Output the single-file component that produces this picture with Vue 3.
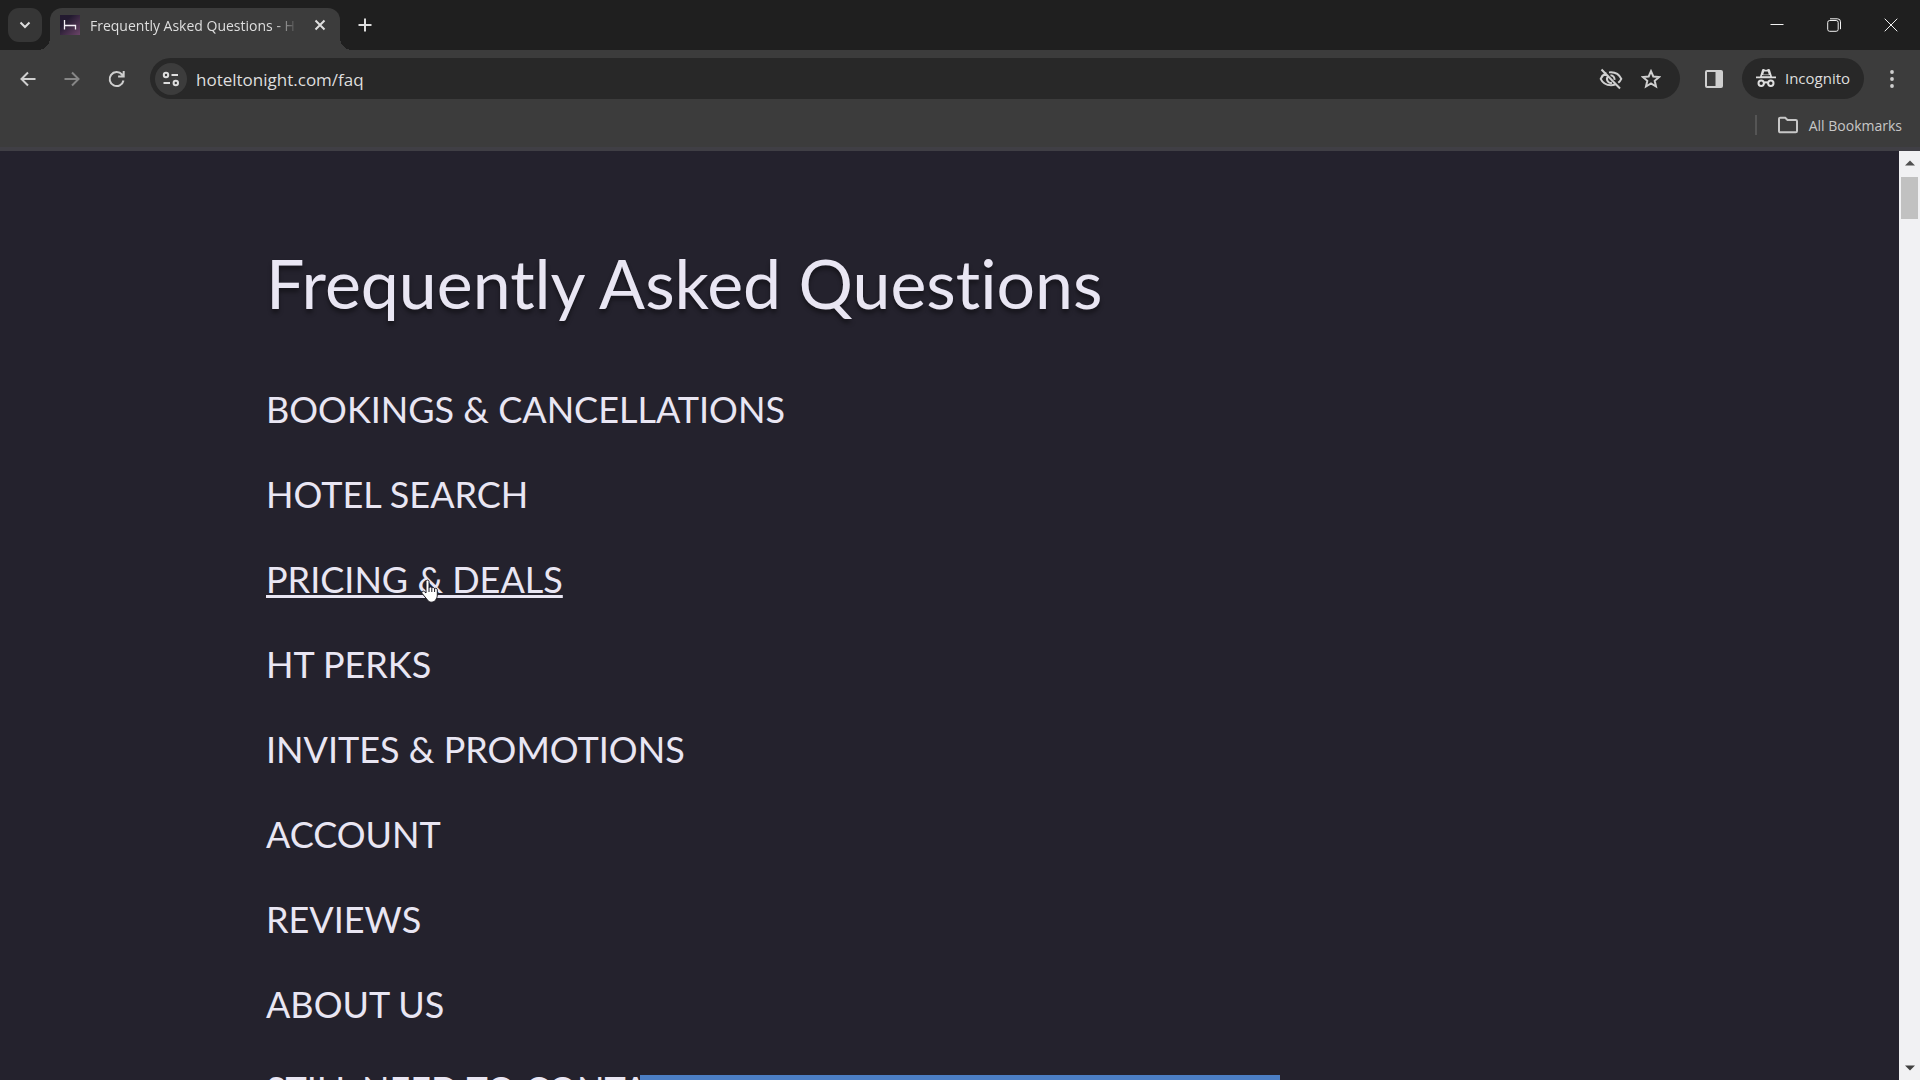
<script setup>
const topics = [
  'Bookings & Cancellations',
  'Hotel Search',
  'Pricing & Deals',
  'HT Perks',
  'Invites & Promotions',
  'Account',
  'Reviews',
  'About Us',
  'Still Need To Contact Us?',
]
const hovered = 2
</script>

<template>
  <div class="browser">
    <header class="tabs">
      <button class="tab-search" aria-label="Search tabs">
        <svg width="14" height="14" viewBox="0 0 14 14"><path d="M2.5 4.5 7 9l4.5-4.5" class="line" /></svg>
      </button>
      <div class="tab">
        <svg class="favicon" width="20" height="20" viewBox="0 0 20 20">
          <defs>
            <linearGradient id="fav" x1="0" y1="0" x2="1" y2="1">
              <stop offset=".3" stop-color="#231a30" />
              <stop offset="1" stop-color="#6b4468" />
            </linearGradient>
          </defs>
          <rect width="20" height="20" fill="url(#fav)" />
          <path d="M4.500 5v9.500M4.500 10.500h11V14.500" fill="none" stroke="#f4eef6" stroke-width="1.300" />
        </svg>
        <span class="tab-title">Frequently Asked Questions - H</span>
        <button class="tab-close" aria-label="Close tab">
          <svg width="12" height="12" viewBox="0 0 12 12"><path d="m1.500 1.500 9 9m0-9-9 9" class="line" /></svg>
        </button>
      </div>
      <button class="new-tab" aria-label="New tab">
        <svg width="14" height="14" viewBox="0 0 14 14"><path d="M7 .5v13M.5 7h13" class="line" /></svg>
      </button>
      <div class="window-controls">
        <button aria-label="Minimize">
          <svg width="14" height="14" viewBox="0 0 14 14"><path d="M.5 6.500h13" class="thin" /></svg>
        </button>
        <button aria-label="Restore">
          <svg width="14" height="14" viewBox="0 0 14 14">
            <rect x=".7" y="2.500" width="10.500" height="10.800" rx="2" class="thin" />
            <path d="M3 .8h7.500a3 3 0 0 1 3 3v7.400" class="thin" />
          </svg>
        </button>
        <button aria-label="Close">
          <svg width="14" height="14" viewBox="0 0 14 14"><path d="m.7.7 12.600 12.600m0-12.600L.7 13.300" class="thin" /></svg>
        </button>
      </div>
    </header>

    <div class="toolbar">
      <nav class="history">
        <button class="tool" aria-label="Back">
          <svg width="18" height="18" viewBox="0 0 18 18"><path d="M16.500 9H2.500m6.500-6.500L2.500 9 9 15.500" class="line" /></svg>
        </button>
        <button class="tool off" aria-label="Forward">
          <svg width="18" height="18" viewBox="0 0 18 18"><path d="M1.500 9h14M9 2.500 15.500 9 9 15.500" class="line" /></svg>
        </button>
        <button class="tool" aria-label="Reload">
          <svg width="18" height="18" viewBox="0 0 18 18">
            <path d="M16.500 10.500A7 7 0 1 1 15 4.500L16.500 6.200M16.700 1v5.600h-5.600" class="line" />
          </svg>
        </button>
      </nav>
      <div class="omnibox">
        <button class="site-info" aria-label="Site information">
          <svg width="18" height="16" viewBox="0 0 18 16">
            <circle cx="4" cy="4" r="2.200" class="line" /><path d="M9.500 4H16M1.500 12h6.500" class="line" />
            <circle cx="13.800" cy="12" r="2.200" class="line" />
          </svg>
        </button>
        <input class="address" type="text" value="hoteltonight.com/faq" aria-label="Address" />
        <button class="tool narrow" aria-label="Third-party cookies blocked">
          <svg width="24" height="22" viewBox="0 0 24 22">
            <path d="M7.500 5C4.800 6.200 2.800 8.300 1.700 10.800c1.800 4 5.700 6.400 10.300 6.400 1.400 0 2.800-.2 4-.7M10 4.400c.7-.1 1.300-.2 2-.2 4.600 0 8.500 2.600 10.300 6.600-.7 1.500-1.700 2.800-3 3.900M11.500 7.200a4 4 0 0 1 4 4.600M8.600 8.800A4 4 0 0 0 13 14.800M2.500 1.500l18.500 19" class="line" />
          </svg>
        </button>
        <button class="tool narrow" aria-label="Bookmark this tab">
          <svg width="20" height="20" viewBox="0 0 20 20">
            <path d="m10 2.200 2.300 5.300 5.800.5-4.400 3.800 1.300 5.700-5-3-5 3 1.300-5.700L1.900 8l5.800-.5z" class="line" />
          </svg>
        </button>
      </div>
      <button class="tool" aria-label="Side panel">
        <svg width="20" height="20" viewBox="0 0 20 20">
          <rect x="2" y="2" width="16" height="16" rx="1" class="line" /><path d="M11.500 2H18v16h-6.500z" fill="currentColor" />
        </svg>
      </button>
      <button class="incognito">
        <svg width="20" height="20" viewBox="0 0 20 20">
          <path d="M0 8.500h4L6 2c.2-.8.800-1.200 1.600-.9l2.400.8 2.400-.8c.8-.3 1.400.1 1.600.9l2 6.500h4v1.800H0z" fill="currentColor" />
          <path d="M6 7.700h8" stroke="#282828" stroke-width="1" />
          <path d="M8.200 3.400h3.600l1 3H7.200z" fill="#282828" />
          <circle cx="5.200" cy="15.300" r="2.700" class="line" /><circle cx="14.800" cy="15.300" r="2.700" class="line" />
          <path d="M7.900 15q2.100-1.500 4.200 0" class="line" />
        </svg>
        <span>Incognito</span>
      </button>
      <button class="tool" aria-label="Menu">
        <svg width="6" height="18" viewBox="0 0 6 18" fill="currentColor">
          <circle cx="3" cy="2" r="1.900" /><circle cx="3" cy="9" r="1.900" /><circle cx="3" cy="16" r="1.900" />
        </svg>
      </button>
    </div>

    <div class="bookmarks">
      <button class="all-bookmarks">
        <svg width="22" height="18" viewBox="0 0 22 18">
          <path d="M2 15V3a1.300 1.300 0 0 1 1.300-1.300h4.900l2.300 2.300h8.200A1.300 1.300 0 0 1 20 5.300V15a1.300 1.300 0 0 1-1.300 1.300H3.300A1.300 1.300 0 0 1 2 15z" class="line" />
        </svg>
        <span>All Bookmarks</span>
      </button>
    </div>

    <div class="viewport">
      <main class="page">
        <h1>Frequently Asked Questions</h1>
        <ul class="topics">
          <li v-for="(topic, i) in topics" :key="topic">
            <a href="#" :class="{ hovered: i === hovered }">{{ topic }}<svg
              v-if="i === hovered" class="pointer" width="20" height="24" viewBox="0 0 20 24">
              <path d="M6 2.500C6 .6 9 .6 9 2.500V9c.3-1.500 2.700-1.300 2.800.3.500-1.300 2.700-1 2.800.6.600-1.100 2.700-.8 2.700.9V16c0 2-.6 3-1.300 4.300C14.500 24 9 24 7.500 21L2.200 14.500c-1.200-1.600.8-3.200 2.200-1.900L6 14z" fill="#fff" stroke="#1b1922" stroke-width="1" />
              <path d="M9 9v4m2.800-3.500V13m2.800-3v3" stroke="#1b1922" stroke-width="1" />
            </svg></a>
          </li>
        </ul>
      </main>
      <div class="scrollbar" aria-hidden="true">
        <svg width="10" height="6" viewBox="0 0 10 6"><path d="m0 5.500 5-5 5 5z" fill="#505050" /></svg>
        <div class="thumb"></div>
        <svg width="10" height="6" viewBox="0 0 10 6"><path d="m0 .5 5 5 5-5z" fill="#404040" /></svg>
      </div>
      <div class="banner"></div>
    </div>
  </div>
</template>

<style>
body {
  margin: 0;
  background: #24222d;
}
</style>

<style scoped>
.browser {
  display: flex;
  flex-direction: column;
  height: 100vh;
  overflow: hidden;
  background: #3c3c3c;
  color: #dedede;
  font-family: "Open Sans", "Noto Sans", sans-serif;
}
button {
  display: flex;
  align-items: center;
  justify-content: center;
  flex: none;
  padding: 0;
  border: 0;
  background: none;
  color: inherit;
  font: inherit;
}
svg {
  display: block;
  flex: none;
}
.line {
  fill: none;
  stroke: currentColor;
  stroke-width: 2;
}
.thin {
  fill: none;
  stroke: #f2f2f2;
  stroke-width: 1;
}

.tabs {
  display: flex;
  flex: none;
  height: 50px;
  padding-left: 8px;
  background: #1f1f1f;
}
.tab-search {
  width: 34px;
  height: 34px;
  margin-top: 8px;
  border-radius: 11px;
  background: #363636;
}
.tab {
  position: relative;
  display: flex;
  align-items: center;
  box-sizing: border-box;
  width: 290px;
  height: 42px;
  margin: 8px 0 0 8px;
  padding: 0 8px 8px 10px;
  border-radius: 12px 12px 0 0;
  background: #3c3c3c;
}
.tab::before,
.tab::after {
  content: "";
  position: absolute;
  bottom: 0;
  width: 12px;
  height: 12px;
}
.tab::before {
  right: 100%;
  background: radial-gradient(circle at 0 0, transparent 12px, #3c3c3c 12px);
}
.tab::after {
  left: 100%;
  background: radial-gradient(circle at 100% 0, transparent 12px, #3c3c3c 12px);
}
.tab-title {
  flex: 1;
  margin: 0 8px 0 10px;
  padding-top: 2px;
  font-size: 14px;
  line-height: 20px;
  white-space: nowrap;
  mask-image: linear-gradient(to right, #000 184px, transparent 208px);
}
.tab-close {
  width: 24px;
  height: 24px;
}
.new-tab {
  width: 34px;
  height: 34px;
  margin: 8px 0 0 8px;
}
.window-controls {
  display: flex;
  margin-left: auto;
  padding-right: 1px;
}
.window-controls button {
  width: 57px;
  height: 50px;
}

.toolbar {
  display: flex;
  flex: none;
  align-items: center;
  gap: 6px;
  padding: 8px 6px 0;
}
.history {
  display: flex;
}
.tool {
  width: 44px;
  height: 41px;
  color: #cfcfcf;
}
.tool.narrow {
  width: 40px;
}
.tool.off {
  color: #868686;
}
.omnibox {
  display: flex;
  flex: 1;
  align-items: center;
  height: 41px;
  margin: 0 6px;
  padding: 0 9px 0 5px;
  box-sizing: border-box;
  border-radius: 21px;
  background: #282828;
}
.site-info {
  width: 32px;
  height: 32px;
  border-radius: 50%;
  background: #3c3c3c;
}
.address {
  flex: 1;
  min-width: 0;
  margin-left: 9px;
  padding: 2px 0 0;
  border: 0;
  outline: 0;
  background: none;
  color: #dedede;
  font: 17px/24px "Open Sans", "Noto Sans", sans-serif;
}
.incognito {
  gap: 9px;
  width: 122px;
  height: 41px;
  padding-bottom: 1px;
  border-radius: 21px;
  background: #282828;
  font-size: 15px;
}
.bookmarks {
  display: flex;
  flex: none;
  align-items: center;
  justify-content: flex-end;
  box-sizing: border-box;
  height: 52px;
  padding: 4px 18px 0 0;
  border-bottom: 4px solid #403f45;
}
.all-bookmarks {
  gap: 10px;
  height: 20px;
  padding-left: 20px;
  border-left: 2px solid #555;
  color: #c7c7c7;
  font-size: 14px;
}

.viewport {
  position: relative;
  display: flex;
  flex: 1;
  min-height: 0;
  background: #24222d;
}
.page {
  flex: 1;
  overflow: hidden;
  padding: 86px 64px 0 266px;
  color: #e9e6f3;
  font-family: Lato, "Open Sans", sans-serif;
}
h1 {
  margin: 0 0 60px;
  font-size: 68px;
  font-weight: 400;
  font-variant-ligatures: none;
  line-height: 92px;
  text-shadow: 0 4px 4px rgba(0, 0, 0, 0.4);
}
.topics {
  display: flex;
  flex-direction: column;
  gap: 45px;
  margin: 0;
  padding: 0;
  list-style: none;
}
.topics li {
  font-size: 36px;
  line-height: 40px;
}
.topics a {
  position: relative;
  display: inline-block;
  color: inherit;
  text-decoration: none;
  text-transform: uppercase;
}
.topics a.hovered {
  text-decoration: underline;
  text-decoration-thickness: 3px;
  text-underline-offset: 2px;
}
.pointer {
  position: absolute;
  top: 50%;
  left: 52%;
}
.scrollbar {
  display: flex;
  flex-direction: column;
  align-items: center;
  width: 21px;
  box-sizing: border-box;
  padding: 9px 0 9px;
  background: #f1f1f3;
}
.thumb {
  width: 17px;
  height: 42px;
  margin: 11px 0 auto;
  background: #c1c1c1;
}
.banner {
  position: absolute;
  bottom: 0;
  left: 50%;
  width: 640px;
  height: 5px;
  margin-left: -320px;
  background: #4c7fc4;
}
</style>
